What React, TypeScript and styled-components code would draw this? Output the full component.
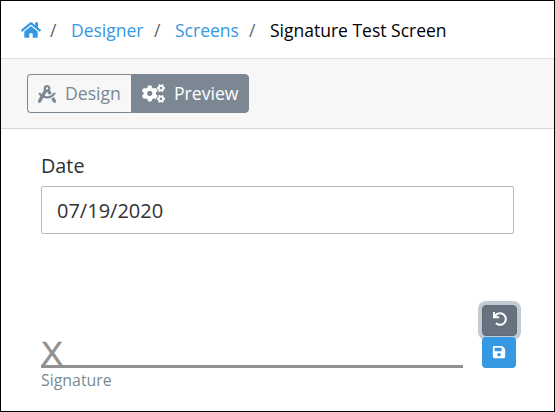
import React from "react";
import styled, { createGlobalStyle } from "styled-components";
import { FaCogs, FaDraftingCompass, FaHome, FaSave, FaUndo } from "react-icons/fa";

const GlobalStyle = createGlobalStyle`
  * { box-sizing: border-box; }
  body { margin: 0; font-family: "Open Sans", sans-serif; background: #fff; }
`;

const Frame = styled.div`
  display: flex;
  flex-direction: column;
  width: 555px;
  height: 412px;
  border: 1px solid #000;
  background: #fff;
  overflow: hidden;
`;

const Breadcrumb = styled.nav`
  display: flex;
  align-items: center;
  height: 58px;
  padding: 2px 0 0 20px;
  border-bottom: 1px solid #dedede;
  font-size: 17.5px;
  font-weight: 400;
  line-height: 27px;
  white-space: nowrap;
`;

const HomeLink = styled.a`
  display: flex;
  width: 19px;
  margin-bottom: 2px;
  color: #3498e3;
  font-size: 20px;
  svg { flex: none; }
`;

const Crumb = styled.a<{ $width: number }>`
  width: ${(p) => p.$width}px;
  color: #3498e3;
`;

const CurrentCrumb = styled.span`
  color: #000;
`;

const Separator = styled.span`
  width: 31px;
  padding-left: 10px;
  color: #5c656d;
`;

const Toolbar = styled.div`
  display: flex;
  align-items: flex-start;
  height: 70px;
  padding: 15px 0 0 26px;
  background: #f7f7f7;
  border-bottom: 1px solid #d8d8d8;
`;

const ModeButton = styled.button<{ $active?: boolean; $width: number }>`
  display: flex;
  align-items: center;
  gap: 9px;
  width: ${(p) => p.$width}px;
  height: 39px;
  padding: 0 0 0 10px;
  border: 1px solid #7b8894;
  border-radius: ${(p) => (p.$active ? "0 4px 4px 0" : "4px 0 0 4px")};
  border-right-width: ${(p) => (p.$active ? 1 : 0)}px;
  background: ${(p) => (p.$active ? "#7b8894" : "#f7f7f7")};
  color: ${(p) => (p.$active ? "#fff" : "#7b8894")};
  font: 400 17.6px/27px "Open Sans", sans-serif;
  svg { flex: none; }
`;

const Content = styled.main`
  display: flex;
  flex-direction: column;
  padding: 21px 36px 0 40px;
`;

const Label = styled.label`
  height: 36px;
  color: #2b2f33;
  font-size: 19.8px;
  line-height: 32px;
`;

const DateInput = styled.input`
  width: 473px;
  height: 48px;
  padding: 0 15px;
  border: 1px solid #b3bcc4;
  border-radius: 2px;
  background: #fff;
  color: #333;
  font: 400 20px/30px "Open Sans", sans-serif;
  outline: none;
`;

const SignatureRow = styled.div`
  display: flex;
  justify-content: space-between;
  margin-top: 71px;
  width: 475px;
`;

const SignaturePad = styled.div`
  display: flex;
  flex-direction: column;
  width: 422px;
`;

const SignatureLine = styled.div`
  height: 63px;
  border-bottom: 3px solid #919191;
  color: #919191;
  font-family: "Liberation Sans", Arial, sans-serif;
  font-size: 33px;
  line-height: 44px;
  padding-top: 27px;
  -webkit-text-stroke: 0.4px #919191;
`;

const SignatureCaption = styled.span`
  color: #7b8894;
  font-size: 15.9px;
  line-height: 24px;
`;

const Actions = styled.div`
  display: flex;
  flex-direction: column;
  width: 34px;
  gap: 1px;
`;

const ActionButton = styled.button<{ $focused?: boolean }>`
  display: flex;
  align-items: center;
  justify-content: center;
  width: ${(p) => (p.$focused ? 35 : 34)}px;
  height: 31px;
  padding: 0 0 ${(p) => (p.$focused ? 3 : 2)}px;
  border: ${(p) => (p.$focused ? "1px solid #5f6d78" : "0")};
  border-radius: 4px;
  background: ${(p) => (p.$focused ? "#66737e" : "#3498e3")};
  box-shadow: ${(p) => (p.$focused ? "0 0 0 4px #c3cad1" : "none")};
  color: #fff;
  font-size: 14px;
  z-index: ${(p) => (p.$focused ? 0 : 1)};
`;

export default function App() {
  return (
    <>
      <GlobalStyle />
      <Frame>
        <Breadcrumb>
          <HomeLink><FaHome /></HomeLink>
          <Separator>/</Separator>
          <Crumb $width={73}>Designer</Crumb>
          <Separator>/</Separator>
          <Crumb $width={64}>Screens</Crumb>
          <Separator>/</Separator>
          <CurrentCrumb>Signature Test Screen</CurrentCrumb>
        </Breadcrumb>
        <Toolbar>
          <ModeButton $width={104}><FaDraftingCompass size={18} />Design</ModeButton>
          <ModeButton $active $width={118}><FaCogs size={23} />Preview</ModeButton>
        </Toolbar>
        <Content>
          <Label htmlFor="date">Date</Label>
          <DateInput id="date" defaultValue="07/19/2020" />
          <SignatureRow>
            <SignaturePad>
              <SignatureLine>X</SignatureLine>
              <SignatureCaption>Signature</SignatureCaption>
            </SignaturePad>
            <Actions>
              <ActionButton $focused aria-label="Undo"><FaUndo /></ActionButton>
              <ActionButton aria-label="Save"><FaSave /></ActionButton>
            </Actions>
          </SignatureRow>
        </Content>
      </Frame>
    </>
  );
}
